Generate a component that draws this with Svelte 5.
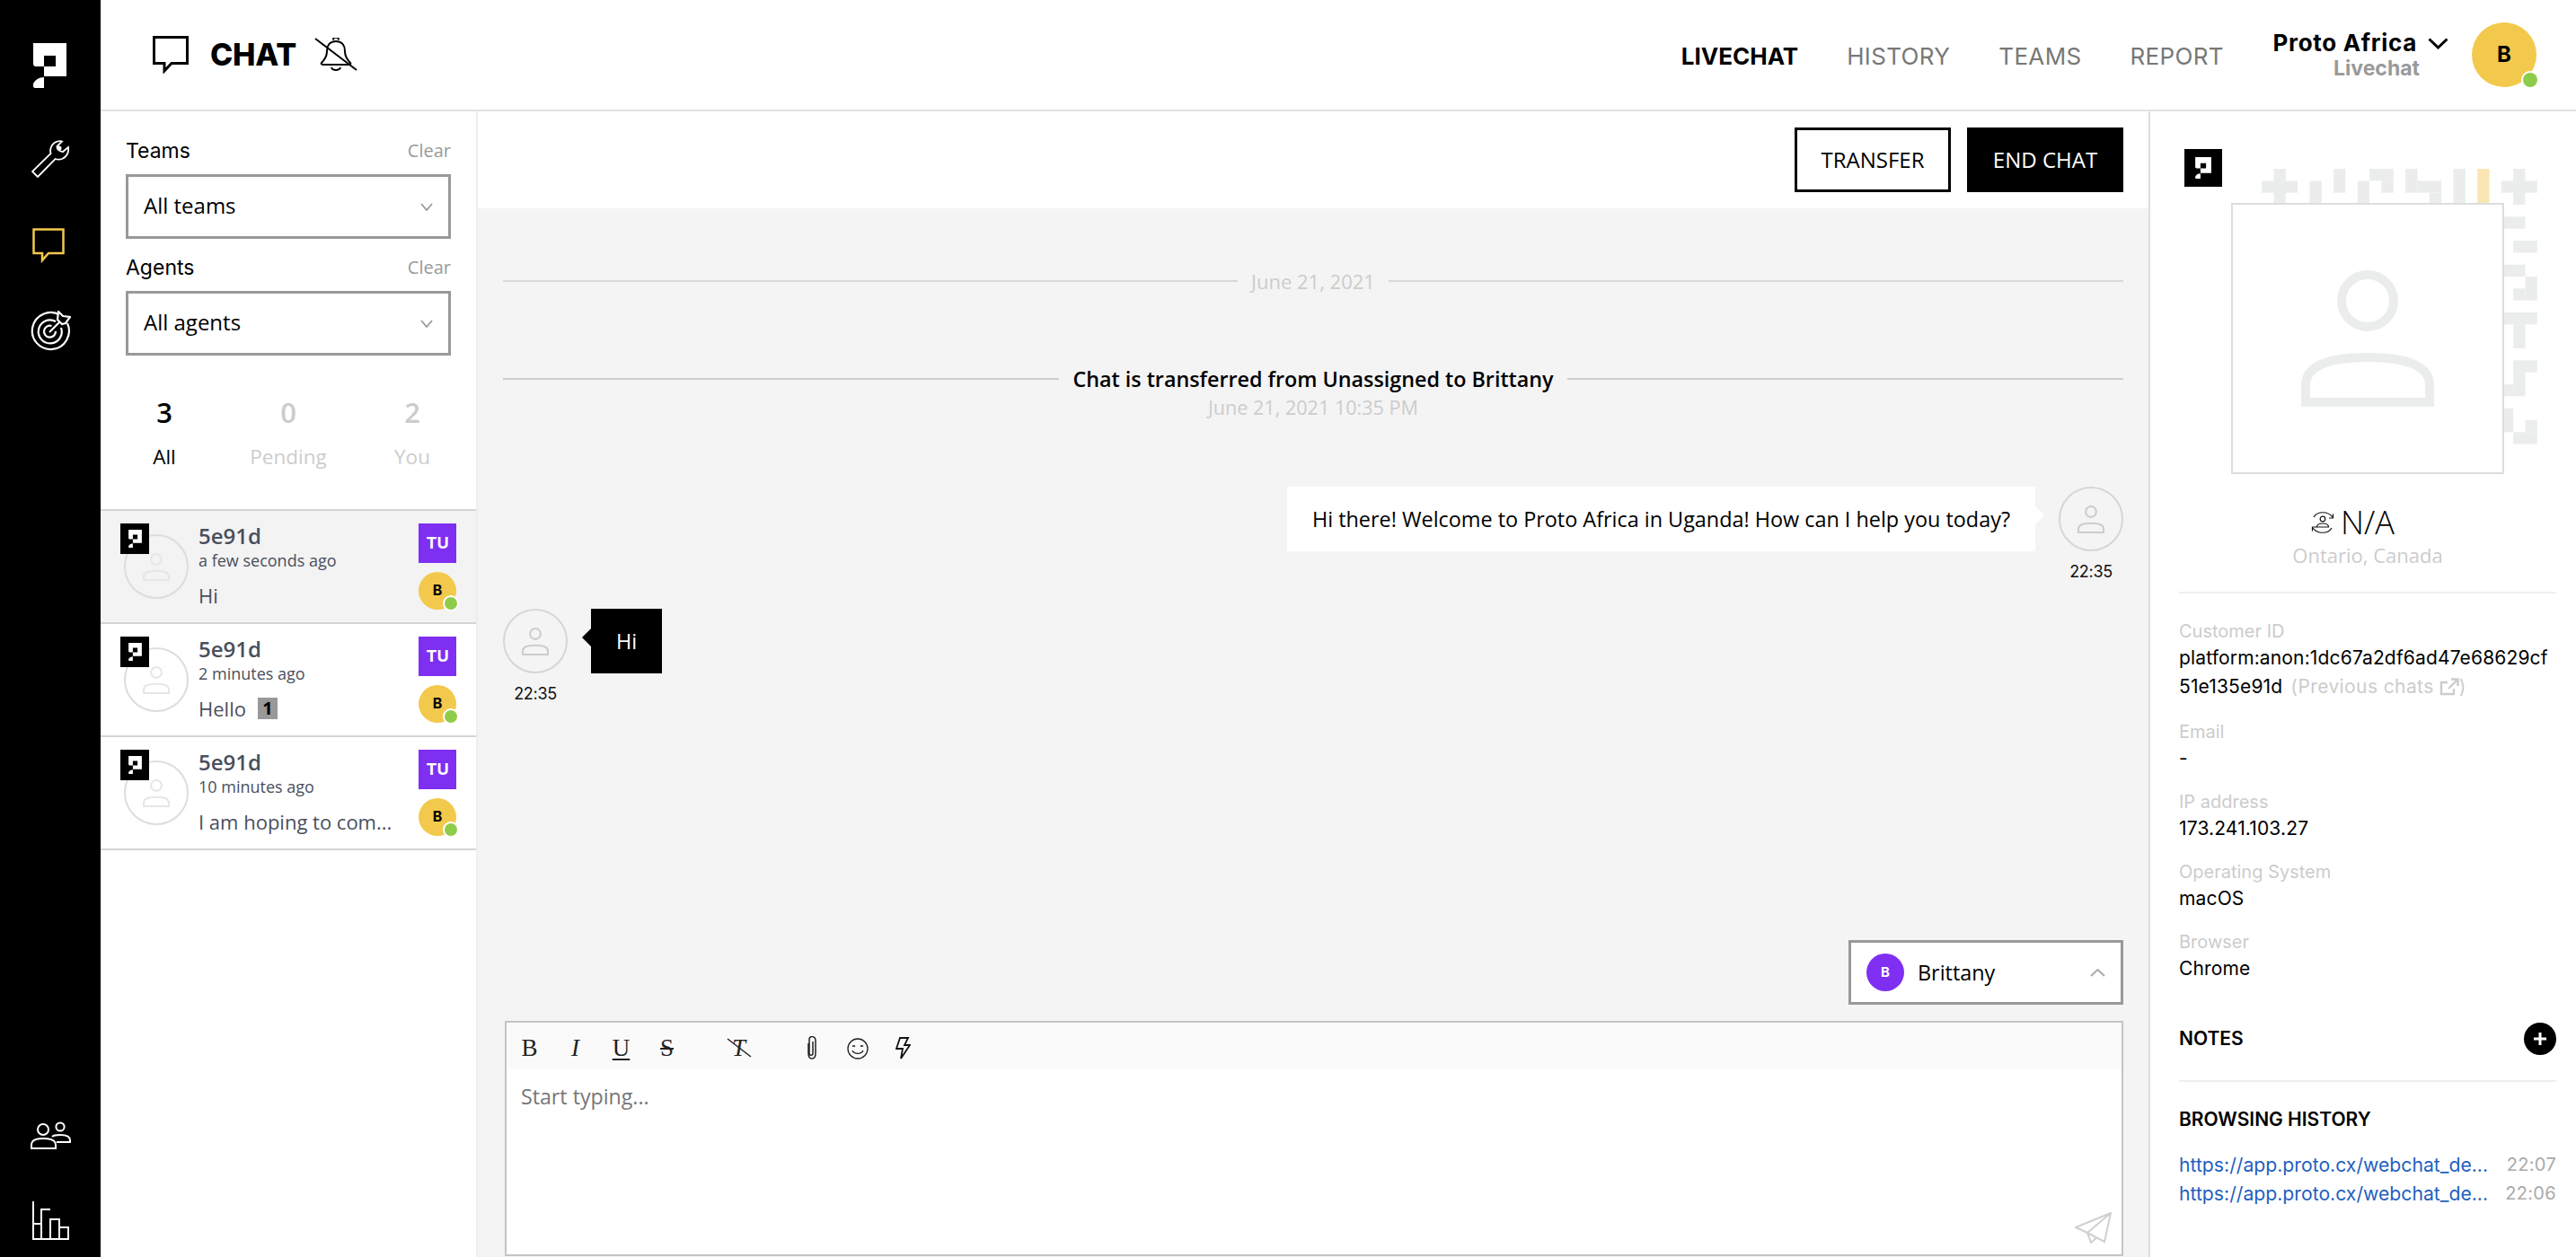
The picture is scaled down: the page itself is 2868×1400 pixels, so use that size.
<script>
  const threads = [
    { ago: 'a few seconds ago', text: 'Hi', active: true },
    { ago: '2 minutes ago', text: 'Hello', unread: 1 },
    { ago: '10 minutes ago', text: 'I am hoping to com...' }
  ]
  const fields = [
    { label: 'Email', value: '-' },
    { label: 'IP address', value: '173.241.103.27' },
    { label: 'Operating System', value: 'macOS' },
    { label: 'Browser', value: 'Chrome' }
  ]
  const visits = [
    { url: 'https://app.proto.cx/webchat_de...', time: '22:07' },
    { url: 'https://app.proto.cx/webchat_de...', time: '22:06' }
  ]
  const stats = [
    { n: 3, label: 'All', on: true },
    { n: 0, label: 'Pending' },
    { n: 2, label: 'You' }
  ]
  // background squares behind the customer picture, in grid cells [x, y, w, h]
  const cells = [
    [0,1,3,1],[1,0,1,3],[4,1,1,2],[6,0,1,2],[8,1,1,2],[9,0,2,1],[10,1,1,1],[12,0,1,2],[13,1,2,1],[14,2,1,1],
    [16,0,1,3],[20,1,3,1],[21,0,1,3],[20,4,2,1],[21,6,2,1],[20,8,2,1],[22,9,1,2],[21,10,1,1],[20,12,3,1],
    [21,13,1,2],[21,16,2,1],[21,17,1,2],[20,18,1,1],[20,20,1,2],[21,22,2,1],[22,21,1,1]
  ]
</script>

{#snippet mark(fill)}
  <svg class="mark" viewBox="0 0 37 50" fill={fill}>
    <path fill-rule="evenodd" d="M0 0H37V37H12V26H3Q0 26 0 23ZM12 14H25V26H12Z" />
    <path d="M12 38V50H2Q0 50 0 48V45Q4 38 12 38Z" />
  </svg>
{/snippet}

{#snippet person(cls)}
  <svg class={cls} viewBox="0 0 148 152" fill="none" stroke="currentColor" stroke-width="10">
    <circle cx="74" cy="34" r="29" />
    <path d="M5 147V128C5 105 35 97 74 97C113 97 143 105 143 128V147Z" />
  </svg>
{/snippet}

{#snippet face(cls)}
  <span class="face {cls}">
    {@render person('face-person')}
  </span>
{/snippet}

<div class="app">
  <nav class="rail">
    <div class="rail-logo">{@render mark('#fff')}</div>
    <svg class="ico wrench" viewBox="0 0 42 42" fill="none" stroke="#fff" stroke-width="1.800">
      <path d="M7 41L1 35L21.500 15C20 9 23 3 29 1.500C31 1 33 1 34 1.500L28.500 7C28 10 31.500 13 35 13L41 8C42 14 39 19 34 21C31 22 29 22 26.500 21Z" />
      <circle cx="31" cy="9" r="2.500" fill="#fff" stroke="none" />
    </svg>
    <svg class="ico bubble" viewBox="0 0 36 39" fill="none" stroke="#f2c94c" stroke-width="2.500">
      <path d="M1.500 1.500H34.500V28H18L11 36V28H1.500Z" />
    </svg>
    <svg class="ico target" viewBox="0 0 45 45" fill="none" stroke="#fff" stroke-width="2.200">
      <path d="M33 5A20.500 20.500 0 1 0 41 14" />
      <path d="M28 12A13 13 0 1 0 34 19" />
      <path d="M23.500 17A6.500 6.500 0 1 0 28 23" />
      <path d="M21 24L33 12" />
      <path d="M30 10L31 1L36 6L44 7L39 14L35 15Z" fill="#000" />
    </svg>
    <div class="rail-gap"></div>
    <svg class="ico users" viewBox="0 0 45 31" fill="none" stroke="#fff" stroke-width="2">
      <circle cx="14" cy="9" r="6" />
      <path d="M1 30V26C1 21 6 19 14 19C22 19 28 21 28 26V30Z" />
      <circle cx="33" cy="6" r="4.600" />
      <path d="M24 17C26 15 29 15 33 15C39 15 44 16 44 21V23H29" />
    </svg>
    <svg class="ico bars" viewBox="0 0 42 43" fill="none" stroke="#fff" stroke-width="2">
      <path d="M2 0V42H41V29H31V42M31 20H21V42M21 9H11V42M11 25H2" />
      <path d="M21 20H31V29" />
    </svg>
  </nav>

  <div class="main">
    <header class="top">
      <svg class="top-bubble" viewBox="0 0 40 42" fill="none" stroke="#000" stroke-width="3">
        <path d="M1.500 1.500H38.500V30.500H21L13 39V30.500H1.500Z" />
      </svg>
      <h1>CHAT</h1>
      <svg class="top-bell" viewBox="0 0 48 38" fill="none" stroke="#000" stroke-width="2">
        <path d="M24 4C17 4 14 9 14 15C14 21 12 24 8 28C7 29 8 30 10 30H38C40 30 41 29 40 28C36 24 34 21 34 15C34 9 31 4 24 4Z" />
        <path d="M21 2.500A3 3 0 0 1 27 2.500M19 33C20 37 28 37 29 33M1 1L47 36" />
      </svg>
      <div class="tabs">
        <a class="on" href="#livechat">LIVECHAT</a>
        <a href="#history">HISTORY</a>
        <a href="#teams">TEAMS</a>
        <a href="#report">REPORT</a>
      </div>
      <div class="org">
        <div class="org-name">Proto Africa
          <svg viewBox="0 0 23 13" fill="none" stroke="#000" stroke-width="3"><path d="M1.500 1.500L11.500 11L21.500 1.500" /></svg>
        </div>
        <div class="org-sub">Livechat</div>
      </div>
      <div class="me">B<i class="dot"></i></div>
    </header>

    <div class="body">
      <aside class="list">
        <div class="filters">
          <div class="filter-head"><span>Teams</span><small>Clear</small></div>
          <div class="select"><span>All teams</span>
            <svg viewBox="0 0 14 9" fill="none" stroke="#999" stroke-width="1.800"><path d="M1 1L7 8L13 1" /></svg>
          </div>
          <div class="filter-head second"><span>Agents</span><small>Clear</small></div>
          <div class="select"><span>All agents</span>
            <svg viewBox="0 0 14 9" fill="none" stroke="#999" stroke-width="1.800"><path d="M1 1L7 8L13 1" /></svg>
          </div>
        </div>
        <div class="stats">
          {#each stats as s}
            <div class="stat" class:on={s.on}><b>{s.n}</b><span>{s.label}</span></div>
          {/each}
        </div>
        <div class="threads">
          {#each threads as t}
            <div class="thread" class:active={t.active}>
              <div class="thread-pic">
                {@render face('small')}
                <span class="tile">{@render mark('#fff')}</span>
              </div>
              <div class="thread-text">
                <div class="thread-name">5e91d</div>
                <div class="thread-ago">{t.ago}</div>
                <div class="thread-msg" class:unread={t.unread}>
                  <span>{t.text}</span>
                  {#if t.unread}<em>{t.unread}</em>{/if}
                </div>
              </div>
              <div class="thread-side">
                <span class="team">TU</span>
                <span class="agent">B<i class="dot"></i></span>
              </div>
            </div>
          {/each}
        </div>
      </aside>

      <section class="chat">
        <div class="actions">
          <button class="btn">TRANSFER</button>
          <button class="btn dark">END CHAT</button>
        </div>
        <div class="feed">
          <div class="sep date"><i></i><span>June 21, 2021</span><i></i></div>
          <div class="sep event"><i></i><span>Chat is transferred from Unassigned to Brittany</span><i></i></div>
          <div class="event-time">June 21, 2021 10:35 PM</div>

          <div class="msg out">
            <div class="bubble-box">Hi there! Welcome to Proto Africa in Uganda! How can I help you today?</div>
            <div class="who">{@render face('')}<time>22:35</time></div>
          </div>
          <div class="msg in">
            <div class="who">{@render face('')}<time>22:35</time></div>
            <div class="bubble-box">Hi</div>
          </div>
        </div>
        <div class="assign">
          <div class="assign-box">
            <span class="assign-pic">B</span>
            <span class="assign-name">Brittany</span>
            <svg viewBox="0 0 17 9" fill="none" stroke="#aaa" stroke-width="2"><path d="M1 8L8.500 1L16 8" /></svg>
          </div>
        </div>
        <div class="editor">
          <div class="tools">
            <span class="tool">B</span>
            <span class="tool it">I</span>
            <span class="tool un">U</span>
            <span class="tool st">S</span>
            <span class="tool clear it">T
              <svg viewBox="0 0 28 22" fill="none" stroke="#222" stroke-width="1.500"><path d="M1 1L27 21" /></svg>
            </span>
            <span class="tool wide">
              <svg class="clip-ico" viewBox="0 0 16 27" fill="none" stroke="#222" stroke-width="1.500"><path d="M4 8V19C4 27 12 27 12 19V5C12 0 6 -1 5 3V19C5 22 9 22 9 19V6" /></svg>
            </span>
            <span class="tool">
              <svg class="smile" viewBox="0 0 24 24" fill="none" stroke="#222" stroke-width="1.300"><circle cx="12" cy="12" r="11" /><path d="M6 14C8 18.500 16 18.500 18 14M6 9.500Q7.500 8 9 9.500M15 9.500Q16.500 8 18 9.500" /></svg>
            </span>
            <span class="tool">
              <svg class="bolt" viewBox="0 0 17 25" fill="none" stroke="#111" stroke-width="1.800"><path d="M5 1H14L10 9H16L6 24L8 13H1Z" /></svg>
            </span>
          </div>
          <div class="input">Start typing...</div>
          <svg class="send" viewBox="0 0 41 35" fill="none" stroke="#d0d0d0" stroke-width="2"><path d="M40 1L1 17L14 23L33 33L40 1ZM40 1L14 23L18 34L25 28" /></svg>
        </div>
      </section>

      <aside class="info">
        <div class="pic-wrap">
          <svg class="squares" viewBox="0 0 23 24" width="307" height="320" aria-hidden="true">
            {#each cells as c}
              <rect x={c[0]} y={c[1]} width={c[2]} height={c[3]} fill="#ebeded" />
            {/each}
            <rect x="18" y="0" width="1" height="3" fill="#f9e6b2" />
          </svg>
          <span class="tile big">{@render mark('#fff')}</span>
          <div class="pic">{@render person('pic-person')}</div>
        </div>
        <div class="name">
          <svg viewBox="0 0 28 28" fill="none" stroke="#111" stroke-width="1.200">
            <path d="M4 8C8 1 20 1 25 8M24 20C20 27 8 27 3 20" />
            <path d="M25.500 4.500V9H21M2.500 23.500V19H7" />
            <circle cx="14" cy="10" r="2.800" />
            <path d="M7.500 19C7.500 15.500 10 15 14 15C18 15 20.500 15.500 20.500 19Z" />
          </svg>
          <span>N/A</span>
        </div>
        <div class="place">Ontario, Canada</div>
        <div class="details">
          <div class="field id">
            <label>Customer ID</label>
            <div class="value">platform:anon:1dc67a2df6ad47e68629cf<br />51e135e91d <span class="prev">(Previous chats<svg viewBox="0 0 22 20" fill="none" stroke="#ccc" stroke-width="2.400"><path d="M16 12V18H2V5H9M10 12L20 2M13 1.500H20.500V9" /></svg>)</span></div>
          </div>
          {#each fields as f}
            <div class="field">
              <label>{f.label}</label>
              <div class="value">{f.value}</div>
            </div>
          {/each}
        </div>
        <div class="notes">
          <h3>NOTES</h3>
          <span class="plus"><svg viewBox="0 0 16 16" stroke="#fff" stroke-width="3"><path d="M8 1V15M1 8H15" /></svg></span>
        </div>
        <div class="visits">
          <h3>BROWSING HISTORY</h3>
          {#each visits as v}
            <div class="visit"><a href="#visit">{v.url}</a><span>{v.time}</span></div>
          {/each}
        </div>
      </aside>
    </div>
  </div>
</div>

<style>
  :global(body) {
    margin: 0;
    background: #fff;
    font-family: "Open Sans", sans-serif;
    color: #000;
  }
  svg { display: block; }
  .app { display: flex; width: 2868px; height: 1400px; overflow: hidden; }

  .rail { width: 112px; flex: none; background: #000; display: flex; flex-direction: column; align-items: center; padding-top: 48px; box-sizing: border-box; }
  .rail-logo { width: 37px; height: 50px; margin-right: 2px; }
  .mark { width: 100%; height: 100%; }
  .wrench { width: 42px; height: 42px; margin-top: 58px; }
  .bubble { width: 36px; height: 39px; margin-top: 56px; margin-right: 4px; }
  .target { width: 45px; height: 45px; margin-top: 53px; }
  .rail-gap { flex: 1; }
  .users { width: 45px; height: 31px; margin-bottom: 58px; }
  .bars { width: 42px; height: 43px; margin-bottom: 19px; }

  .main { flex: 1; display: flex; flex-direction: column; min-width: 0; }
  .top { height: 122px; flex: none; border-bottom: 2px solid #e3e3e3; display: flex; align-items: center; padding: 0 44px 0 58px; }
  .top-bubble { width: 40px; height: 42px; }
  h1 { margin: 0 0 0 24px; font: 800 34px/1 Inter, sans-serif; letter-spacing: -0.2px; }
  .top-bell { width: 48px; height: 38px; margin-left: 20px; }
  .tabs { margin-left: auto; margin-top: 3px; display: flex; gap: 54px; font: 400 26px/1 Inter, sans-serif; letter-spacing: 0.35px; }
  .tabs a { color: #777; text-decoration: none; }
  .tabs a.on { color: #000; font-weight: 700; letter-spacing: 0; }
  .org { margin-left: 54px; width: 196px; }
  .org-name { font: 700 26px/30px Inter, sans-serif; letter-spacing: 0.7px; display: flex; align-items: center; gap: 12px; justify-content: flex-end; white-space: nowrap; }
  .org-name svg { width: 23px; height: 13px; }
  .org-sub { font: 700 23px/26px Inter, sans-serif; color: #999; text-align: right; padding-right: 32px; }
  .me { position: relative; width: 72px; height: 72px; margin-left: 26px; border-radius: 50%; background: #f2c94c; display: flex; align-items: center; justify-content: center; font: 700 24px/1 Inter, sans-serif; }
  .dot { position: absolute; right: -1px; bottom: 0; width: 16px; height: 16px; border-radius: 50%; background: #8ecb4a; box-shadow: 0 0 0 2px #fff; }

  .body { flex: 1; display: flex; min-height: 0; }

  .list { width: 420px; flex: none; box-sizing: border-box; border-right: 2px solid #eee; }
  .filters { padding: 29px 28px 0; }
  .filter-head { display: flex; justify-content: space-between; align-items: center; height: 30px; font: 400 23px/30px Inter, sans-serif; }
  .filter-head small { font: 400 20px/30px "Open Sans", sans-serif; color: #999; }
  .filter-head.second { margin-top: 17px; }
  .select { height: 72px; margin-top: 11px; box-sizing: border-box; border: 3px solid #999; display: flex; align-items: center; justify-content: space-between; padding: 0 17px 3px; font-size: 24px; }
  .select svg { width: 14px; height: 9px; margin-top: 3px; }
  .stats { display: grid; grid-template-columns: repeat(3, 138px); padding: 42px 0 0 1px; height: 129px; margin-left: 1px; }
  .stat { display: flex; flex-direction: column; align-items: center; color: #ccc; }
  .stat b { font: 600 31px/42px "Open Sans", sans-serif; }
  .stat span { font-size: 22.500px; line-height: 32px; margin-top: 13px; }
  .stat.on { color: #000; }
  .threads { border-top: 2px solid #d4d4d4; }
  .thread { display: flex; height: 126px; padding: 14px 22px 0 22px; box-sizing: border-box; border-bottom: 2px solid #d4d4d4; }
  .thread.active { background: #f3f3f3; }
  .thread-pic { position: relative; width: 87px; flex: none; }
  .face { display: flex; align-items: center; justify-content: center; box-sizing: border-box; width: 72px; height: 72px; border-radius: 50%; border: 2px solid #d6d6d6; color: #ccc; }
  .face :global(.face-person) { width: 30px; height: 31px; }
  .face.small { position: absolute; left: 4px; top: 12px; color: #e6e6e6; border-color: #ddd; }
  .tile { position: absolute; left: 0; top: 0; width: 32px; height: 34px; background: #000; display: flex; align-items: center; justify-content: center; }
  .tile :global(.mark) { width: 15px; height: 20px; }
  .thread-text { flex: 1; min-width: 0; color: #4a4f5c; }
  .thread-name { font: 600 24px/32px "Open Sans", sans-serif; margin-top: -2px; }
  .thread-ago { font-size: 18px; line-height: 23px; }
  .thread-msg { font-size: 22px; line-height: 32px; margin-top: 11px; display: flex; align-items: center; gap: 13px; white-space: nowrap; }
  .thread-msg.unread { font-weight: 500; }
  .thread-msg em { font: 700 20px/24px "Open Sans", sans-serif; background: #999; color: #000; width: 22px; height: 24px; text-align: center; }
  .thread-side { width: 42px; flex: none; display: flex; flex-direction: column; gap: 10px; }
  .team { width: 42px; height: 44px; background: #7f2ff2; color: #fff; font: 700 18px/44px Inter, sans-serif; text-align: center; }
  .agent { position: relative; width: 42px; height: 42px; border-radius: 50%; background: #f2c94c; font: 700 16px/40px Inter, sans-serif; text-align: center; }
  .agent .dot { width: 14px; height: 14px; right: -1px; bottom: 0; }

  .chat { width: 1862px; flex: none; box-sizing: border-box; display: flex; flex-direction: column; background: #f4f4f4; border-right: 2px solid #ddd; }
  .actions { height: 108px; flex: none; box-sizing: border-box; background: #fff; display: flex; justify-content: flex-end; gap: 18px; padding: 18px 28px 0 0; }
  .btn { width: 174px; height: 72px; box-sizing: border-box; background: #fff; border: 3px solid #000; font: 500 24px/1 "Open Sans", sans-serif; color: #000; padding: 0; }
  .btn.dark { background: #000; color: #fff; }
  .feed { flex: 1; min-height: 0; padding: 66px 28px 0 28px; }
  .sep { display: flex; align-items: center; gap: 15px; height: 30px; }
  .sep i { flex: 1; height: 2px; background: #d8d8d8; }
  .date { color: #ccc; font-size: 22px; }
  .event { margin-top: 79px; font-weight: 600; font-size: 23.300px; }
  .event i { background: #ccc; }
  .event-time { text-align: center; color: #ccc; font-size: 21.600px; line-height: 30px; margin-top: 2px; }
  .msg { display: flex; align-items: flex-start; }
  .msg.out { justify-content: flex-end; margin-top: 73px; }
  .msg.in { margin-top: 29px; }
  .who { display: flex; flex-direction: column; align-items: center; width: 72px; }
  .who time { font: 400 18px/24px Inter, sans-serif; letter-spacing: -0.300px; color: #111; margin-top: 11px; white-space: nowrap; }
  .bubble-box { position: relative; height: 72px; box-sizing: border-box; display: flex; align-items: center; padding: 0 28px; font-size: 23.400px; background: #fff; margin-right: 26px; }
  .bubble-box::after { content: ""; position: absolute; right: -10px; top: 22px; border-left: 10px solid #fff; border-top: 10px solid transparent; border-bottom: 10px solid transparent; }
  .msg.in .bubble-box { margin: 0 0 0 26px; background: #000; color: #fff; padding: 0 28px; }
  .msg.in .bubble-box::after { right: auto; left: -10px; border-left: 0; border-right: 10px solid #000; }

  .assign { padding-right: 28px; display: flex; justify-content: flex-end; }
  .assign-box { width: 306px; height: 72px; box-sizing: border-box; background: #fff; border: 3px solid #999; display: flex; align-items: center; padding: 0 17px; }
  .assign-pic { width: 42px; height: 42px; border-radius: 50%; background: #7f2ff2; color: #fff; font: 700 15px/42px Inter, sans-serif; text-align: center; }
  .assign-name { font-size: 23.400px; margin-left: 15px; flex: 1; }
  .assign-box svg { width: 17px; height: 9px; }
  .editor { position: relative; height: 262px; margin: 18px 28px 1px 30px; box-sizing: border-box; background: #fff; border: 2px solid #c4c4c4; flex: none; }
  .tools { height: 52px; background: #fafafa; display: flex; align-items: center; padding-top: 5px; box-sizing: border-box; }
  .tool { position: relative; width: 51px; display: flex; align-items: center; justify-content: center; font: 400 27px/1 "Liberation Serif", serif; color: #222; }
  .tool.it { font-style: italic; }
  .tool.un { text-decoration: underline; text-underline-offset: 3px; text-decoration-thickness: 1.500px; }
  .tool.st { text-decoration: line-through; text-decoration-thickness: 1.500px; }
  .tool.clear { margin-left: 29px; }
  .tool.clear svg { position: absolute; left: 12px; top: 2px; width: 28px; height: 22px; }
  .tool.wide { margin-left: 30px; }
  .clip-ico { width: 16px; height: 27px; }
  .smile { width: 24px; height: 24px; }
  .bolt { width: 17px; height: 25px; }
  .input { padding: 14px 16px; font-size: 23.200px; line-height: 32px; color: #777; }
  .send { position: absolute; right: 11px; bottom: 12px; width: 41px; height: 35px; }

  .info { width: 474px; flex: none; box-sizing: border-box; padding: 42px 22px 0 32px; font-family: Inter, sans-serif; }
  .pic-wrap { position: relative; height: 362px; }
  .squares { position: absolute; left: 92px; top: 22px; }
  .pic-wrap .tile { left: 6px; top: 0; width: 42px; height: 42px; }
  .pic-wrap .tile :global(.mark) { width: 18px; height: 24px; }
  .pic { position: absolute; left: 58px; top: 60px; width: 304px; height: 302px; box-sizing: border-box; background: #fff; border: 2px solid #ddd; display: flex; align-items: center; justify-content: center; color: #ebeded; }
  .pic :global(.pic-person) { width: 148px; height: 152px; }
  .name { display: flex; justify-content: center; align-items: center; gap: 6px; height: 40px; margin-top: 34px; padding-right: 34px; font: 300 36px/40px "Open Sans", sans-serif; }
  .name svg { width: 28px; height: 28px; }
  .place { text-align: center; color: #ccc; font: 400 22px/32px "Open Sans", sans-serif; }
  .details { border-top: 2px solid #eee; margin-top: 25px; padding-top: 28px; }
  .field { margin-bottom: 18px; }
  .field.id { margin-bottom: 20px; }
  label { display: block; color: #ccc; font-size: 20px; line-height: 28px; }
  .value { font-size: 21px; line-height: 32px; letter-spacing: 0.150px; white-space: nowrap; }
  .prev { color: #ccc; display: inline-flex; align-items: center; font-size: 21px; letter-spacing: 0.400px; margin-left: 3px; }
  .prev svg { width: 22px; height: 20px; margin-left: 6px; }
  .notes { display: flex; align-items: center; justify-content: space-between; margin-top: 44px; padding-bottom: 28px; border-bottom: 2px solid #eee; }
  h3 { margin: 0; font: 600 21px/28px Inter, sans-serif; }
  .plus { width: 36px; height: 36px; border-radius: 50%; background: #000; display: flex; align-items: center; justify-content: center; }
  .plus svg { width: 16px; height: 16px; }
  .visits { padding-top: 28px; }
  .visits h3 { margin-bottom: 20px; }
  .visit { display: flex; justify-content: space-between; font-size: 21.200px; line-height: 32px; white-space: nowrap; }
  .visit a { color: #1f5fbf; text-decoration: none; }
  .visit span { color: #aaa; font-size: 20px; letter-spacing: 0.300px; }
</style>
